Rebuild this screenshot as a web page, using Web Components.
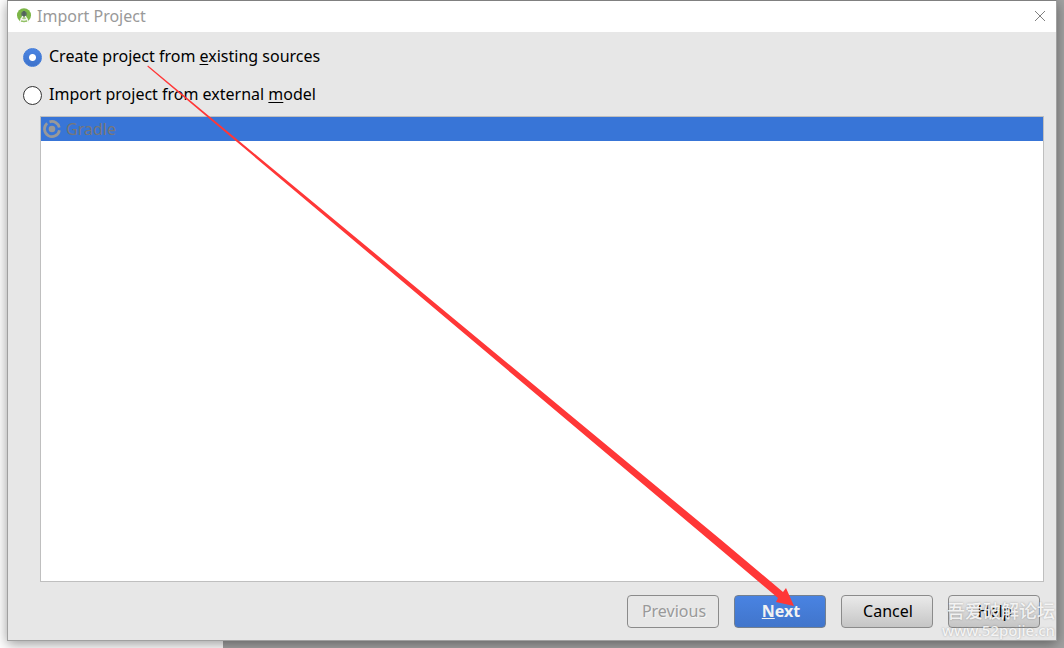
<!DOCTYPE html>
<html lang="en">
<head>
<meta charset="utf-8">
<title>Import Project</title>
<style>
html { height: 100%; }
body { margin: 0; min-height: 100%; display: flex; font: 16px/24px "Noto Sans", "Open Sans", "Noto Sans CJK SC", sans-serif; color: #000; }
</style>
</head>
<body>
<import-wizard></import-wizard>
<script>
const define = (name, html) => {
  const template = document.createElement('template');
  template.innerHTML = html;
  customElements.define(name, class extends HTMLElement {
    constructor() {
      super();
      this.attachShadow({ mode: 'open' }).append(template.content.cloneNode(true));
    }
  });
};

define('title-bar', `
<style>
:host { display: flex; box-sizing: border-box; align-items: center; gap: 5px; height: 31px; padding: 0 10px 2px 9px; background: #fff; color: #999; }
h1 { flex: 1; margin: 0; font: inherit; }
svg { display: block; }
button { border: 0; padding: 0; background: none; }
</style>
<svg width="15" height="16" viewBox="0 0 15 16" aria-hidden="true">
  <circle cx="7" cy="7.300" r="7" fill="#7cb648"/>
  <path d="M3.500 12 5.500 8h3L11 12 9 13.500H5z" fill="#a8cb82"/>
  <circle cx="7" cy="6" r="2.700" fill="#5a6a62"/>
  <path d="M6 3h2v5H6z" fill="#52645b"/>
  <path d="M5.800 8 2.500 14.800M8.200 8l3.800 6.800M3.500 10.500q3.500 3 7 0" fill="none" stroke="#f4f7f1" stroke-width="1.300"/>
</svg>
<h1><slot></slot></h1>
<button type="button" aria-label="Close"><svg width="12" height="12" viewBox="0 0 12 12"><path d="M1 1l10 10M11 1 1 11" stroke="#808080" stroke-width="1" fill="none"/></svg></button>`);

define('source-options', `
<style>
:host { display: grid; gap: 14px; }
label { display: flex; align-items: center; gap: 7px; }
input { appearance: none; width: 19px; height: 19px; margin: 2px 0 0; border: 1px solid #333; border-radius: 50%; background: #fff; }
input:checked { border-color: #427bd8; background: radial-gradient(circle, #fff 3px, transparent 4px), linear-gradient(#4a84e2, #3d72cb); }
u { text-underline-offset: 2px; }
</style>
<label><input type="radio" name="source" checked><span>Create project from <u>e</u>xisting sources</span></label>
<label><input type="radio" name="source"><span>Import project from external <u>m</u>odel</span></label>`);

define('model-list', `
<style>
:host { display: block; border: 1px solid #bfbfbf; background: #fff; }
ul { margin: 0; padding: 0; list-style: none; }
li { display: flex; align-items: center; gap: 5px; height: 24px; padding-left: 2px; background: #3875d7; color: #777; }
</style>
<ul role="listbox" aria-label="External model" aria-disabled="true">
  <li role="option" aria-selected="true"><svg width="18" height="18" viewBox="0 0 18 18" fill="none" stroke="#999" stroke-width="2.700" aria-hidden="true">
    <circle cx="9" cy="9" r="3.300" fill="#999" stroke="none"/>
    <path d="M6.500 1.900A7.500 7.500 0 0 1 16.300 7.500M16.400 10.200A7.500 7.500 0 1 1 4.200 3.300"/>
  </svg><span>Gradle</span></li>
</ul>`);

define('push-button', `
<style>
:host { display: block; width: 92px; }
button { box-sizing: border-box; width: 100%; height: 33px; padding: 0 0 2px 2px; border: 1px solid #8b8b8b; border-radius: 4px; background: linear-gradient(#eaeaea, #c5c5c5); color: #000; font: inherit; }
:host([kind="primary"]) button { background: linear-gradient(#4983e2, #4175cb); border-color: #74808f; color: #f2f2f2; font-weight: bold; }
:host([kind="off"]) button { background: #e7e7e7; color: #999; text-shadow: 1px 1px #f5f5f5; }
</style>
<button type="button"><slot></slot></button>`);

define('pointer-arrow', `
<style>
:host { position: absolute; inset: 0; pointer-events: none; }
svg { display: block; width: 100%; height: 100%; }
</style>
<svg viewBox="0 0 1064 648" preserveAspectRatio="none" aria-hidden="true"><path d="M148 65.500 720 539 783 592 786 588 794 606 776 602 778 598 720 549 147.300 66.500Z" fill="#ff3737"/></svg>`);

define('site-watermark', `
<style>
:host { position: absolute; right: 9px; bottom: 8px; display: grid; justify-items: end; color: rgba(255,255,255,.85); text-shadow: 0 0 2px rgba(0,0,0,.3); pointer-events: none; white-space: nowrap; }
b { font: 500 18px/20px "Noto Sans CJK SC", sans-serif; }
span { font: 500 15px/20px "Noto Sans", sans-serif; }
</style>
<b lang="zh">吾爱破解论坛</b><span>www.52pojie.cn</span>`);

define('import-wizard', `
<style>
:host { position: relative; flex: 1; display: flex; box-sizing: border-box; padding: 0 7px 7px; overflow: hidden; background: linear-gradient(90deg, #fff 223px, #a3a3a3 223px); }
section { flex: 1; display: flex; flex-direction: column; border: 1px solid #a0a0a0; border-top-color: #808080; background: #e7e7e7; box-shadow: 0 3px 12px rgba(0,0,0,.4); }
main { flex: 1; display: flex; flex-direction: column; padding: 12px 12px 12px 15px; }
model-list { flex: 1; margin: 10px 0 13px 17px; }
footer { display: flex; justify-content: flex-end; gap: 15px; padding-right: 4px; }
</style>
<section aria-label="Import Project">
  <title-bar>Import Project</title-bar>
  <main>
    <source-options></source-options>
    <model-list></model-list>
    <footer>
      <push-button kind="off">Previous</push-button>
      <push-button kind="primary"><u>N</u>ext</push-button>
      <push-button>Cancel</push-button>
      <push-button>Help</push-button>
    </footer>
  </main>
</section>
<pointer-arrow></pointer-arrow>
<site-watermark></site-watermark>`);
</script>
</body>
</html>
